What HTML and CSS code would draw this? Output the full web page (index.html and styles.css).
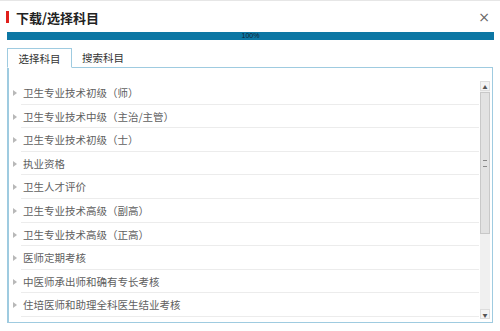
FILE: index.html
```html
<!DOCTYPE html>
<html lang="zh-CN">
<head>
    <meta charset="UTF-8">
    <title>下载/选择科目</title>
    <link rel="stylesheet" href="styles.css">
</head>
<body>
<div class="dialog">
    <!-- 标题栏 -->
    <div class="dialog-head">
        <span class="head-mark"></span>
        <h2 class="head-title">下载/选择科目</h2>
        <span class="head-close">×</span>
    </div>

    <!-- 进度条 -->
    <div class="progress"><span class="progress-text">100%</span></div>

    <!-- 标签页 -->
    <div class="tabs">
        <div class="tab tab-active">选择科目</div>
        <div class="tab">搜索科目</div>
    </div>

    <div class="tab-body">
        <ul class="subject-list">
            <li class="subject">卫生专业技术初级（师）</li>
            <li class="subject">卫生专业技术中级（主治/主管）</li>
            <li class="subject">卫生专业技术初级（士）</li>
            <li class="subject">执业资格</li>
            <li class="subject">卫生人才评价</li>
            <li class="subject">卫生专业技术高级（副高）</li>
            <li class="subject">卫生专业技术高级（正高）</li>
            <li class="subject">医师定期考核</li>
            <li class="subject">中医师承出师和确有专长考核</li>
            <li class="subject">住培医师和助理全科医生结业考核</li>
        </ul>
        <div class="scrollbar">
            <div class="sb-btn">▲</div>
            <div class="sb-track">
                <div class="sb-thumb"><span class="sb-grip"></span></div>
            </div>
            <div class="sb-btn">▼</div>
        </div>
    </div>
</div>
</body>
</html>
```

FILE: styles.css
```css
body { margin: 0; background: #fff; font-family: "Noto Sans CJK SC", "Liberation Sans", sans-serif; }
.dialog { width: 500px; height: 331px; box-sizing: border-box; border-top: 1px solid #e6e6e6; }

.dialog-head { height: 31px; display: flex; align-items: center; padding: 1px 10px 0 6px; box-sizing: border-box; }
.head-mark { width: 3px; height: 12px; background: #e0201c; margin-right: 7px; }
.head-title { margin: 0; font-size: 13px; font-weight: bold; color: #222; flex: 1; }
.head-close { font-size: 14px; color: #666; font-family: "DejaVu Sans", sans-serif; }

.progress { margin: 0 6px 0 7px; height: 8px; background: #0c77a4; text-align: center; line-height: 8px; }
.progress-text { font-size: 7px; color: #123; font-family: "Liberation Sans", sans-serif; vertical-align: top; }

.tabs { display: flex; margin: 8px 0 0 7px; height: 20px; position: relative; z-index: 1; }
.tab { font-size: 10.5px; color: #333; line-height: 19px; padding: 0 10px; }
.tab-active { width: 65px; box-sizing: border-box; text-align: center; border: 1px solid #9fcbe0; border-bottom: 1px solid #fff; background: #fff; }

.tab-body { margin: -1px 7px 0 7px; height: 256px; box-sizing: border-box; border: 1px solid #9fcbe0; border-left: 2px solid #9fcbe0; display: flex; }

.subject-list { list-style: none; margin: 13px 0 0 0; padding: 0; flex: 1; }
.subject { height: 23.6px; box-sizing: border-box; line-height: 23px; font-size: 10.5px; color: #606060; padding-left: 14px; position: relative; background: linear-gradient(#ececec, #ececec) 12px 100% / calc(100% - 12px) 1px no-repeat; }
.subject::before { content: ""; position: absolute; left: 4px; top: 9px; border-left: 4px solid #b8b8b8; border-top: 3px solid transparent; border-bottom: 3px solid transparent; }

.scrollbar { width: 10px; margin: 13px 2px 3px 1px; display: flex; flex-direction: column; background: #f0f0f0; }
.sb-btn { height: 10px; font-size: 5px; line-height: 10px; text-align: center; color: #555; background: #f3f3f3; border: 1px solid #ddd; box-sizing: border-box; }
.sb-track { flex: 1; }
.sb-thumb { height: 142px; margin-top: 1px; background: #e2e2e2; border: 1px solid #c8c8c8; box-sizing: border-box; display: flex; align-items: center; justify-content: center; }
.sb-grip { width: 4px; height: 5px; border-top: 1px solid #888; border-bottom: 1px solid #888; }
```
